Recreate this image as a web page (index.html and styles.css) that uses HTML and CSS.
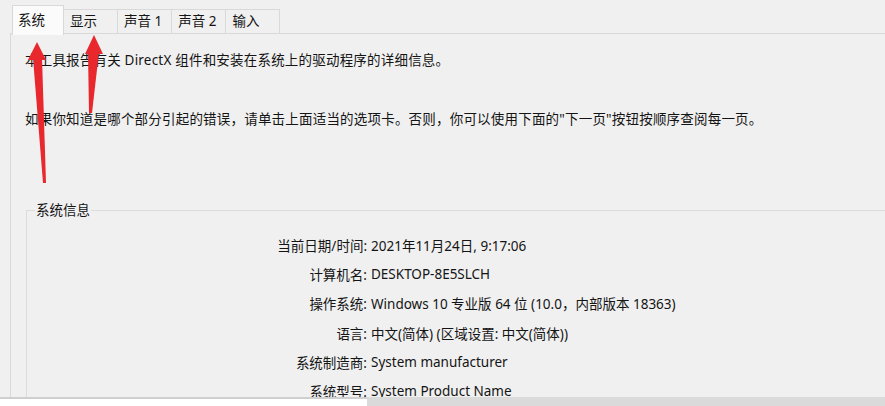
FILE: index.html
```html
<!DOCTYPE html>
<html lang="zh-CN">
<head>
<meta charset="utf-8">
<title>DirectX 诊断工具</title>
<link rel="stylesheet" href="styles.css">
</head>
<body>
<div class="window">
  <div class="tabs">
    <div class="tab active">系统</div>
    <div class="tab">显示</div>
    <div class="tab">声音 1</div>
    <div class="tab">声音 2</div>
    <div class="tab">输入</div>
  </div>
  <div class="panel">
    <p class="intro">本工具报告有关 DirectX 组件和安装在系统上的驱动程序的详细信息。</p>
    <p class="intro second">如果你知道是哪个部分引起的错误，请单击上面适当的选项卡。否则，你可以使用下面的"下一页"按钮按顺序查阅每一页。</p>
    <fieldset class="group">
      <legend class="group-title">系统信息</legend>
      <div class="info">
        <span class="label">当前日期/时间:</span><span class="value">2021年11月24日, 9:17:06</span>
        <span class="label">计算机名:</span><span class="value">DESKTOP-8E5SLCH</span>
        <span class="label">操作系统:</span><span class="value">Windows 10 专业版 64 位 (10.0，内部版本 18363)</span>
        <span class="label">语言:</span><span class="value">中文(简体) (区域设置: 中文(简体))</span>
        <span class="label">系统制造商:</span><span class="value">System manufacturer</span>
        <span class="label">系统型号:</span><span class="value">System Product Name</span>
      </div>
    </fieldset>
  </div>
  <div class="bottom">
    <div class="bottom-left"></div>
    <div class="bottom-right"></div>
  </div>
  <svg class="arrows" width="885" height="406" viewBox="0 0 885 406" aria-hidden="true">
    <polygon points="37,42 28,60 46,60" fill="#e8282c"/>
    <polygon points="33,58 42,58 46,183 43,183" fill="#e8282c"/>
    <polygon points="94,35 85,54 103,54" fill="#e8282c"/>
    <polygon points="88,52 99,52 92,113 89,113" fill="#e8282c"/>
  </svg>
</div>
</body>
</html>
```

FILE: styles.css
```css
html, body {
  margin: 0;
  padding: 0;
}
body {
  background: #f0f0f0;
  font-family: "Noto Sans", "Noto Sans CJK SC", sans-serif;
  font-size: 13.5px;
  color: #141414;
}
.window {
  position: relative;
  width: 885px;
  height: 406px;
  overflow: hidden;
}
.tabs {
  display: flex;
  align-items: flex-end;
  height: 34px;
  padding-left: 12px;
  box-sizing: border-box;
  position: relative;
  z-index: 1;
}
.tab {
  box-sizing: border-box;
  min-width: 54px;
  height: 25px;
  line-height: 23px;
  padding: 0 9px 0 6px;
  border: 1px solid #d9d9d9;
  border-left: none;
  background: #f0f0f0;
  white-space: nowrap;
}
.tab.active {
  min-width: 52px;
  height: 30px;
  line-height: 28px;
  padding-left: 5px;
  padding-bottom: 2px;
  border-left: 1px solid #d9d9d9;
  border-bottom: none;
  background: #fbfbfb;
  margin-bottom: -1px;
}
.panel {
  margin-left: 10px;
  border-left: 1px solid #d9d9d9;
  border-top: 1px solid #d9d9d9;
  margin-top: -1px;
  padding: 16px 0 0 14px;
  height: 400px;
  box-sizing: border-box;
}
.intro {
  margin: 0;
  line-height: 20px;
  letter-spacing: 0.2px;
  white-space: nowrap;
}
.intro.second {
  margin-top: 39px;
}
.group {
  margin: 72px 0 0 1px;
  padding: 0;
  border: 1px solid #dcdcdc;
  border-right: none;
  min-width: 0;
}
.group-title {
  margin-left: 8px;
  padding: 0 1px;
  line-height: 18px;
}
.info {
  display: grid;
  grid-template-columns: 340px 1fr;
  column-gap: 4px;
  padding-top: 11px;
  grid-auto-rows: 29.3px;
  align-items: center;
}
.label {
  text-align: right;
  white-space: nowrap;
}
.value {
  white-space: nowrap;
}
.bottom {
  position: absolute;
  left: 0;
  right: 0;
  bottom: 0;
  height: 9px;
  display: flex;
  z-index: 2;
}
.bottom-left {
  width: 367px;
  background: #ffffff;
  border-top: 2px solid #cfcfcf;
}
.bottom-right {
  flex: 1;
  background: #dadada;
}
.arrows {
  position: absolute;
  left: 0;
  top: 0;
  z-index: 3;
}
```
